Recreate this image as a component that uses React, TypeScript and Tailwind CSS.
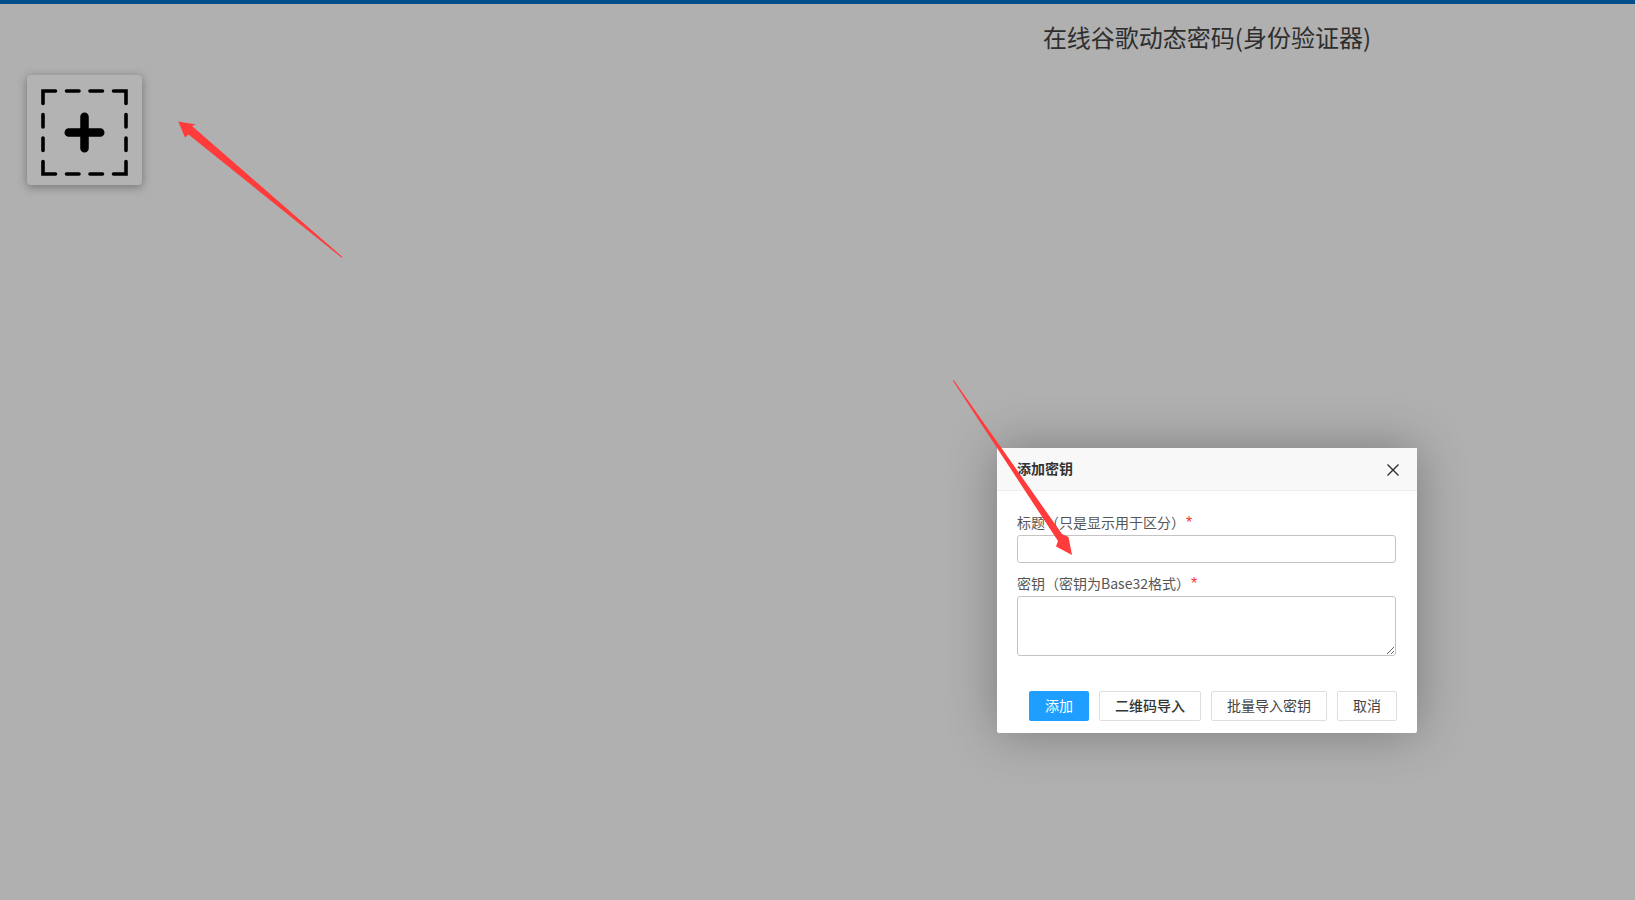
const FONT = '"Noto Sans CJK SC", "Noto Sans", sans-serif';

function AddIcon() {
  return (
    <svg width="87" height="87" viewBox="0 0 87 87" fill="none" stroke="#000">
      <path d="M2 14.5V2H14.5M25.5 2H38M49 2H61.5M72.5 2H85V14.5M85 25.5V38M85 49V61.5M85 72.5V85H72.5M61.5 85H49M38 85H25.5M14.5 85H2V72.5M2 61.5V49M2 38V25.5" strokeWidth="3.6" strokeLinecap="round" />
      <path d="M43.5 27.75V59.25M27.75 43.5H59.25" strokeWidth="8.5" strokeLinecap="round" />
    </svg>
  );
}

function Arrows() {
  return (
    <svg className="absolute left-0 top-0 z-30 pointer-events-none" width="1635" height="900" viewBox="0 0 1635 900">
      <polygon points="178.3,121.5 196,124.5 192,126 342.5,257 341.8,257.8 188.5,134.5 185,137.5" fill="#ff3b3b" />
      <polygon points="953.6,380 1062,534 1068.5,537 1072,555 1056,546.5 1058,541 952.9,380.8" fill="#ff3b3b" />
    </svg>
  );
}

function Field({ label }: { label: string }) {
  return (
    <div className="h-[20px] text-[14px] leading-[20px] text-[#555]">
      {label}
      <span className="ml-px text-[16px] leading-none text-[#ff3333] [font-family:'Liberation_Sans',sans-serif]">*</span>
    </div>
  );
}

function Dialog() {
  return (
    <div className="absolute left-[997px] top-[448px] z-20 flex h-[285px] w-[420px] flex-col rounded-[2px] bg-white shadow-[0_0_50px_rgba(0,0,0,0.3)]">
      <div className="flex h-[43px] items-center justify-between border-b border-[#eee] bg-[#f8f8f8] pl-5 pr-[17px]">
        <span className="relative -top-px text-[14px] font-bold text-[#333]">添加密钥</span>
        <svg className="relative top-[0.5px]" width="14" height="14" viewBox="0 0 14 14" stroke="#2f2f2f" strokeWidth="1.4" fill="none">
          <path d="M1.5 1.5L12.5 12.5M12.5 1.5L1.5 12.5" />
        </svg>
      </div>
      <div className="flex flex-col pl-5 pr-[21px] pt-[21px]">
        <Field label="标题（只是显示用于区分）" />
        <input className="mt-[3px] h-[28px] w-full rounded-[3px] border border-[#c4c4c4] bg-white outline-none" />
        <div className="mt-[10px]">
          <Field label="密钥（密钥为Base32格式）" />
        </div>
        <textarea className="mt-[3px] block h-[60px] w-full rounded-[3px] border border-[#c4c4c4] bg-white outline-none" />
      </div>
      <div className="mt-[35px] flex justify-end gap-[10px] pr-5 text-[14px] leading-[18px]">
        <div className="flex h-[30px] w-[60px] items-center justify-center rounded-[2px] bg-[#1e9fff] pb-[2px] text-white">添加</div>
        <div className="flex h-[30px] w-[102px] items-center justify-center rounded-[2px] border border-[#dedede] pb-[2px] font-medium text-[#333]">二维码导入</div>
        <div className="flex h-[30px] w-[116px] items-center justify-center rounded-[2px] border border-[#dedede] pb-[2px] text-[#444]">批量导入密钥</div>
        <div className="flex h-[30px] w-[60px] items-center justify-center rounded-[2px] border border-[#dedede] pb-[2px] text-[#444]">取消</div>
      </div>
    </div>
  );
}

export default function App() {
  return (
    <div className="relative h-[900px] w-[1635px] overflow-hidden bg-[#b0b0b0]" style={{ fontFamily: FONT }}>
      <div className="h-1 w-full bg-[#024f8c]" />
      <div className="flex">
        <div className="w-[779px] pl-[27px] pt-[71px]">
          <div className="flex h-[110px] w-[115px] items-center justify-center rounded-[4px] bg-[#b3b3b3] pt-[5px] shadow-[0_2px_10px_rgba(0,0,0,0.35)]">
            <AddIcon />
          </div>
        </div>
        <div className="flex-1 pt-[17px] text-center text-[24px] leading-[32px] text-[#2e2e2e]">
          在线谷歌动态密码(身份验证器)
        </div>
      </div>
      <Dialog />
      <Arrows />
    </div>
  );
}
